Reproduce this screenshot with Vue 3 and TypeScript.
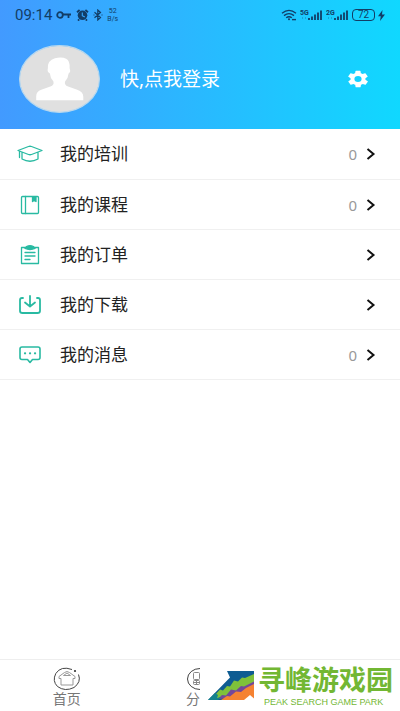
<script setup lang="ts">
interface MenuItem {
  id: string
  label: string
  count?: number
}

const items: MenuItem[] = [
  { id: 'training', label: '我的培训', count: 0 },
  { id: 'course', label: '我的课程', count: 0 },
  { id: 'order', label: '我的订单' },
  { id: 'download', label: '我的下载' },
  { id: 'message', label: '我的消息', count: 0 },
]
</script>

<template>
  <div class="page">
    <header class="header">
      <div class="status">
        <div class="group">
          <span class="time">09:14</span>
          <svg width="16" height="10" viewBox="0 0 16 10" fill="none" stroke="currentColor" stroke-width="1.8">
            <circle cx="4" cy="5" r="2.8" />
            <path d="M7 4.500h8M12.500 4.500V8" />
          </svg>
          <svg width="13" height="12" viewBox="0 0 13 12">
            <circle cx="6.500" cy="6.300" r="4.800" fill="currentColor" />
            <path d="M1 3.200 3.600 1M12 3.200 9.400 1M3.200 10.300 2 11.600M9.800 10.300l1.200 1.300" stroke="currentColor" stroke-width="1.800" />
            <path d="M6.300 3.500v3.200l2.500 1.200" fill="none" stroke="#36a8ff" stroke-width="1.100" />
          </svg>
          <svg width="10" height="12" viewBox="0 0 10 12" fill="none" stroke="currentColor" stroke-width="1.200">
            <path d="M1.500 3.300 7.500 8.500 4.800 11V1l2.700 2.500-6 5.200M.5 6h1M8.500 6h1" />
          </svg>
          <span class="speed"><span>52</span><span>B/s</span></span>
        </div>
        <div class="group right">
          <svg width="16" height="12" viewBox="0 0 16 12" fill="none" stroke="currentColor" stroke-width="1.400">
            <path d="M1 4.200Q8-1.400 15 4.200M3 6.600q5-4 10 0M5.200 8.800q2.800-2.200 5.600 0" />
            <circle cx="8" cy="10.300" r="1" fill="currentColor" stroke="none" />
            <path d="M11 10.600h4" />
          </svg>
          <svg v-for="net in ['5G', '2G']" :key="net" width="23" height="12" viewBox="0 0 23 12">
            <text x="0" y="6" class="net">{{ net }}</text>
            <path d="M9 9v2M12 7.500V11M15 5.500V11M18 3.500V11M21 1.500V11" stroke="currentColor" stroke-width="1.800" />
            <path d="M2 9h1M5 9h1" stroke="currentColor" opacity=".5" />
          </svg>
          <span class="battery">72</span>
          <svg width="7" height="11" viewBox="0 0 7 11"><path d="M4.500 0 0 6.200h2.800L2 11l5-6.500H4z" fill="currentColor" /></svg>
        </div>
      </div>
      <div class="profile">
        <svg class="avatar" viewBox="0 0 80 67" role="img" aria-label="头像">
          <ellipse cx="40" cy="33.500" rx="39.400" ry="32.900" fill="#e0e0e0" stroke="#b8d8ee" stroke-width="1.200" />
          <path d="M17 54.500v-4q0-5 5-6.500l9-3q4-1.500 3-5-3-3-3.500-8-3-1-2-5-.5-8 7-10 7-1.500 11 .5 4 2 3.500 9.500 1.500 4-1 5-.5 5-3.500 8-1 3.500 3 5l9 3q6 2 6 7v3.500z" fill="#fff" />
        </svg>
        <button class="login" type="button">快,点我登录</button>
        <button class="settings" type="button" aria-label="设置">
          <svg width="24" height="20" viewBox="0 0 24 24" preserveAspectRatio="none">
            <path fill="#fff" d="M19.4 13a7.500 7.500 0 0 0 0-2l2.100-1.600a.5.5 0 0 0 .1-.7l-2-3.400a.5.5 0 0 0-.6-.2l-2.500 1a7 7 0 0 0-1.700-1L14.500 2.400a.5.5 0 0 0-.5-.4h-4a.5.5 0 0 0-.5.4l-.4 2.700a7 7 0 0 0-1.700 1l-2.500-1a.5.5 0 0 0-.6.2l-2 3.400a.5.5 0 0 0 .1.700L4.600 11a7.500 7.500 0 0 0 0 2l-2.100 1.600a.5.5 0 0 0-.1.700l2 3.400c.1.200.4.300.6.200l2.500-1a7 7 0 0 0 1.700 1l.4 2.700c0 .2.200.4.500.4h4c.3 0 .5-.2.5-.4l.4-2.700a7 7 0 0 0 1.700-1l2.500 1c.2.100.5 0 .6-.2l2-3.400a.5.5 0 0 0-.1-.7zM12 15.600a3.600 3.600 0 1 1 0-7.200 3.600 3.600 0 0 1 0 7.200z" />
          </svg>
        </button>
      </div>
    </header>

    <main class="list">
      <a v-for="item in items" :key="item.id" class="row" href="#">
        <svg class="icon" width="26" height="22" viewBox="0 0 26 22" fill="none" stroke="currentColor" stroke-width="1.300" stroke-linejoin="round" stroke-linecap="round">
          <template v-if="item.id === 'training'">
            <path d="M1 7.500 11.500 3.500q1.500-.5 3 0L25 7.500l-10.500 4q-1.500.5-3 0zM5 9.500v6.500q8 4.500 16 0V9.500M2.500 8.500v6" />
          </template>
          <template v-else-if="item.id === 'course'">
            <rect x="4.500" y="2.500" width="17" height="17" rx="1" />
            <path d="M8.500 2.500v17" />
            <path d="M15.500 3h3.500v4.500l-1.700-1.300-1.800 1.300z" fill="currentColor" />
          </template>
          <template v-else-if="item.id === 'order'">
            <path d="M8 3.500H4.500v16h17v-16H18" />
            <path d="M9.500 2.500q3.500-1.500 7 0l1.500 2q-5 2-10 0z" fill="currentColor" />
            <path d="M8 8.500h10M8 12h10M8 15.500h5" />
          </template>
          <template v-else-if="item.id === 'download'">
            <path stroke-width="1.800" d="M6 4H5Q3 4 3 6v11q0 2 2.500 2h15q2.500 0 2.500-2V6q0-2-2-2h-1M13 2v10M8 8.500l5 4 5-4" />
          </template>
          <template v-else>
            <path stroke-width="1.600" d="M5 3h16q2 0 2 2v8.500q0 2-2 2h-5.500l-2.500 3-2.500-3H5q-2 0-2-2V5q0-2 2-2z" />
            <path stroke-width="2.200" d="M8 9.300h.1M13 9.300h.1M18 9.300h.1" />
          </template>
        </svg>
        <span class="label">{{ item.label }}</span>
        <span v-if="item.count !== undefined" class="count">{{ item.count }}</span>
        <svg width="10" height="12" viewBox="0 0 10 12" fill="none" stroke="#111" stroke-width="2"><path d="m1.500 1 6 5-6 5" /></svg>
      </a>
    </main>

    <footer class="footer">
      <nav class="tabs">
        <a class="tab" href="#">
          <svg width="28" height="24" viewBox="0 0 28 24" fill="none" stroke-width="1">
            <path d="M19 2.500Q8-1.500 2.800 6.500-1 14 4.500 19.500 12 25 21 20.500 28.500 15 25.500 7.500" stroke="#444" />
            <circle cx="22" cy="4" r="1.100" fill="#333" />
            <path d="M6 9.500 11.500 5.500q2.500-2 5 0L22 9.500v2h-2v6.500H8v-6.500H6zM10.500 8.500 14 6l3.500 2.500z" stroke="#999" />
          </svg>
          <span>首页</span>
        </a>
        <a class="tab" href="#">
          <svg width="28" height="24" viewBox="0 0 28 24" fill="none" stroke="#888" stroke-width="1">
            <ellipse cx="14" cy="12" rx="12.500" ry="10.500" stroke="#444" />
            <rect x="7.500" y="5.500" width="6" height="7" rx="1" />
            <rect x="7.500" y="13.500" width="6" height="4" rx="1" />
            <path d="M8 15.500h5M10.500 14v3M16 6h5v5h-5zM16 13.500h5v4h-5z" />
          </svg>
          <span>分类</span>
        </a>
        <span class="tab"></span>
      </nav>
      <div class="brand">
        <svg width="46" height="29" viewBox="0 0 46 29">
          <path d="M19 0h27v29H0L22 6.500z" fill="#0e5c92" />
          <path d="M7 24 12 18.500l3 1 4-4.500 3 .5 4-6 4 1 4-4 3 .5L46 3v15L22 24 8 28z" fill="#7fc13a" />
          <path d="m10 28 4-4 4 .5 5-6 5 1 5-4.500 3 .5 10-5v12l-16 4z" fill="#74479a" />
          <path d="m13 29 6-4 3 .5 6-5 5 .5 5-4 8-4v16z" fill="#f58232" />
          <path d="m0 29 7-7 3 2-1 3 4-1-3 3z" fill="#14828d" />
          <path d="M36 29 42 24l4 3.500V29z" fill="#fff" />
        </svg>
        <div class="brand-text">
          <strong>寻峰游戏园</strong>
          <small>PEAK SEARCH GAME PARK</small>
        </div>
      </div>
    </footer>
  </div>
</template>

<style>
body {
  margin: 0;
  background: #fff;
}
</style>

<style scoped>
.page {
  display: flex;
  flex-direction: column;
  min-height: 100vh;
  font-family: "Noto Sans", "Noto Sans CJK SC", sans-serif;
  color: #222;
}
.header {
  box-sizing: border-box;
  padding-bottom: 16px;
  background: linear-gradient(90deg, #429aff, #10d8ff);
}
.status {
  display: flex;
  justify-content: space-between;
  align-items: center;
  height: 30px;
  padding: 0 15px;
  color: #123d66;
}
.group {
  display: flex;
  align-items: center;
  gap: 4px;
}
.right {
  gap: 3px;
}
.time {
  font: 15px/20px Roboto, sans-serif;
}
.speed {
  display: flex;
  flex-direction: column;
  align-items: center;
  font: 7px/8px Roboto, sans-serif;
}
.net {
  font: bold 7px Roboto, sans-serif;
  fill: currentColor;
}
.battery {
  box-sizing: border-box;
  width: 23px;
  border: 1px solid currentColor;
  border-radius: 4px;
  font: 10px/10px Roboto, sans-serif;
  text-align: center;
}
.profile {
  display: flex;
  align-items: center;
  padding: 15px 30px 0 19px;
}
.avatar {
  flex: none;
  width: 81px;
  height: 68px;
}
button {
  padding: 0;
  border: 0;
  background: none;
  color: #fff;
  font: inherit;
  cursor: pointer;
}
.login {
  margin-left: 20px;
  font-size: 19px;
  line-height: 24px;
}
.settings {
  display: flex;
  margin-left: auto;
}
.row {
  box-sizing: border-box;
  display: flex;
  align-items: center;
  height: 50px;
  padding: 0 24px 0 17px;
  border-bottom: 1px solid #f0f0f0;
  color: #222;
  text-decoration: none;
}
.row:first-child {
  height: 51px;
}
.icon {
  flex: none;
  color: #29baa2;
}
.label {
  flex: 1;
  margin-left: 17px;
  font-size: 17px;
  line-height: 24px;
}
.count {
  margin-right: 9px;
  color: #999;
  font: 15px/20px "Noto Sans", sans-serif;
}
.footer {
  position: relative;
  margin-top: auto;
  border-top: 1px solid #eee;
}
.tabs {
  display: flex;
  height: 51px;
}
.tab {
  flex: 1;
  display: flex;
  flex-direction: column;
  align-items: center;
  padding-top: 7px;
  color: #777;
  font-size: 14px;
  line-height: 16px;
  text-decoration: none;
}
.brand {
  position: absolute;
  right: 0;
  bottom: 0;
  box-sizing: border-box;
  display: flex;
  align-items: center;
  gap: 4px;
  width: 50%;
  height: 51px;
  padding-left: 8px;
  background: #fff;
  white-space: nowrap;
}
.brand-text {
  display: flex;
  flex-direction: column;
  color: #72b733;
}
.brand strong {
  font: bold 27px/32px "Liberation Sans", "Noto Sans CJK SC", sans-serif;
}
.brand small {
  padding-left: 6px;
  font: 9px/10px "Liberation Sans", sans-serif;
}
</style>
